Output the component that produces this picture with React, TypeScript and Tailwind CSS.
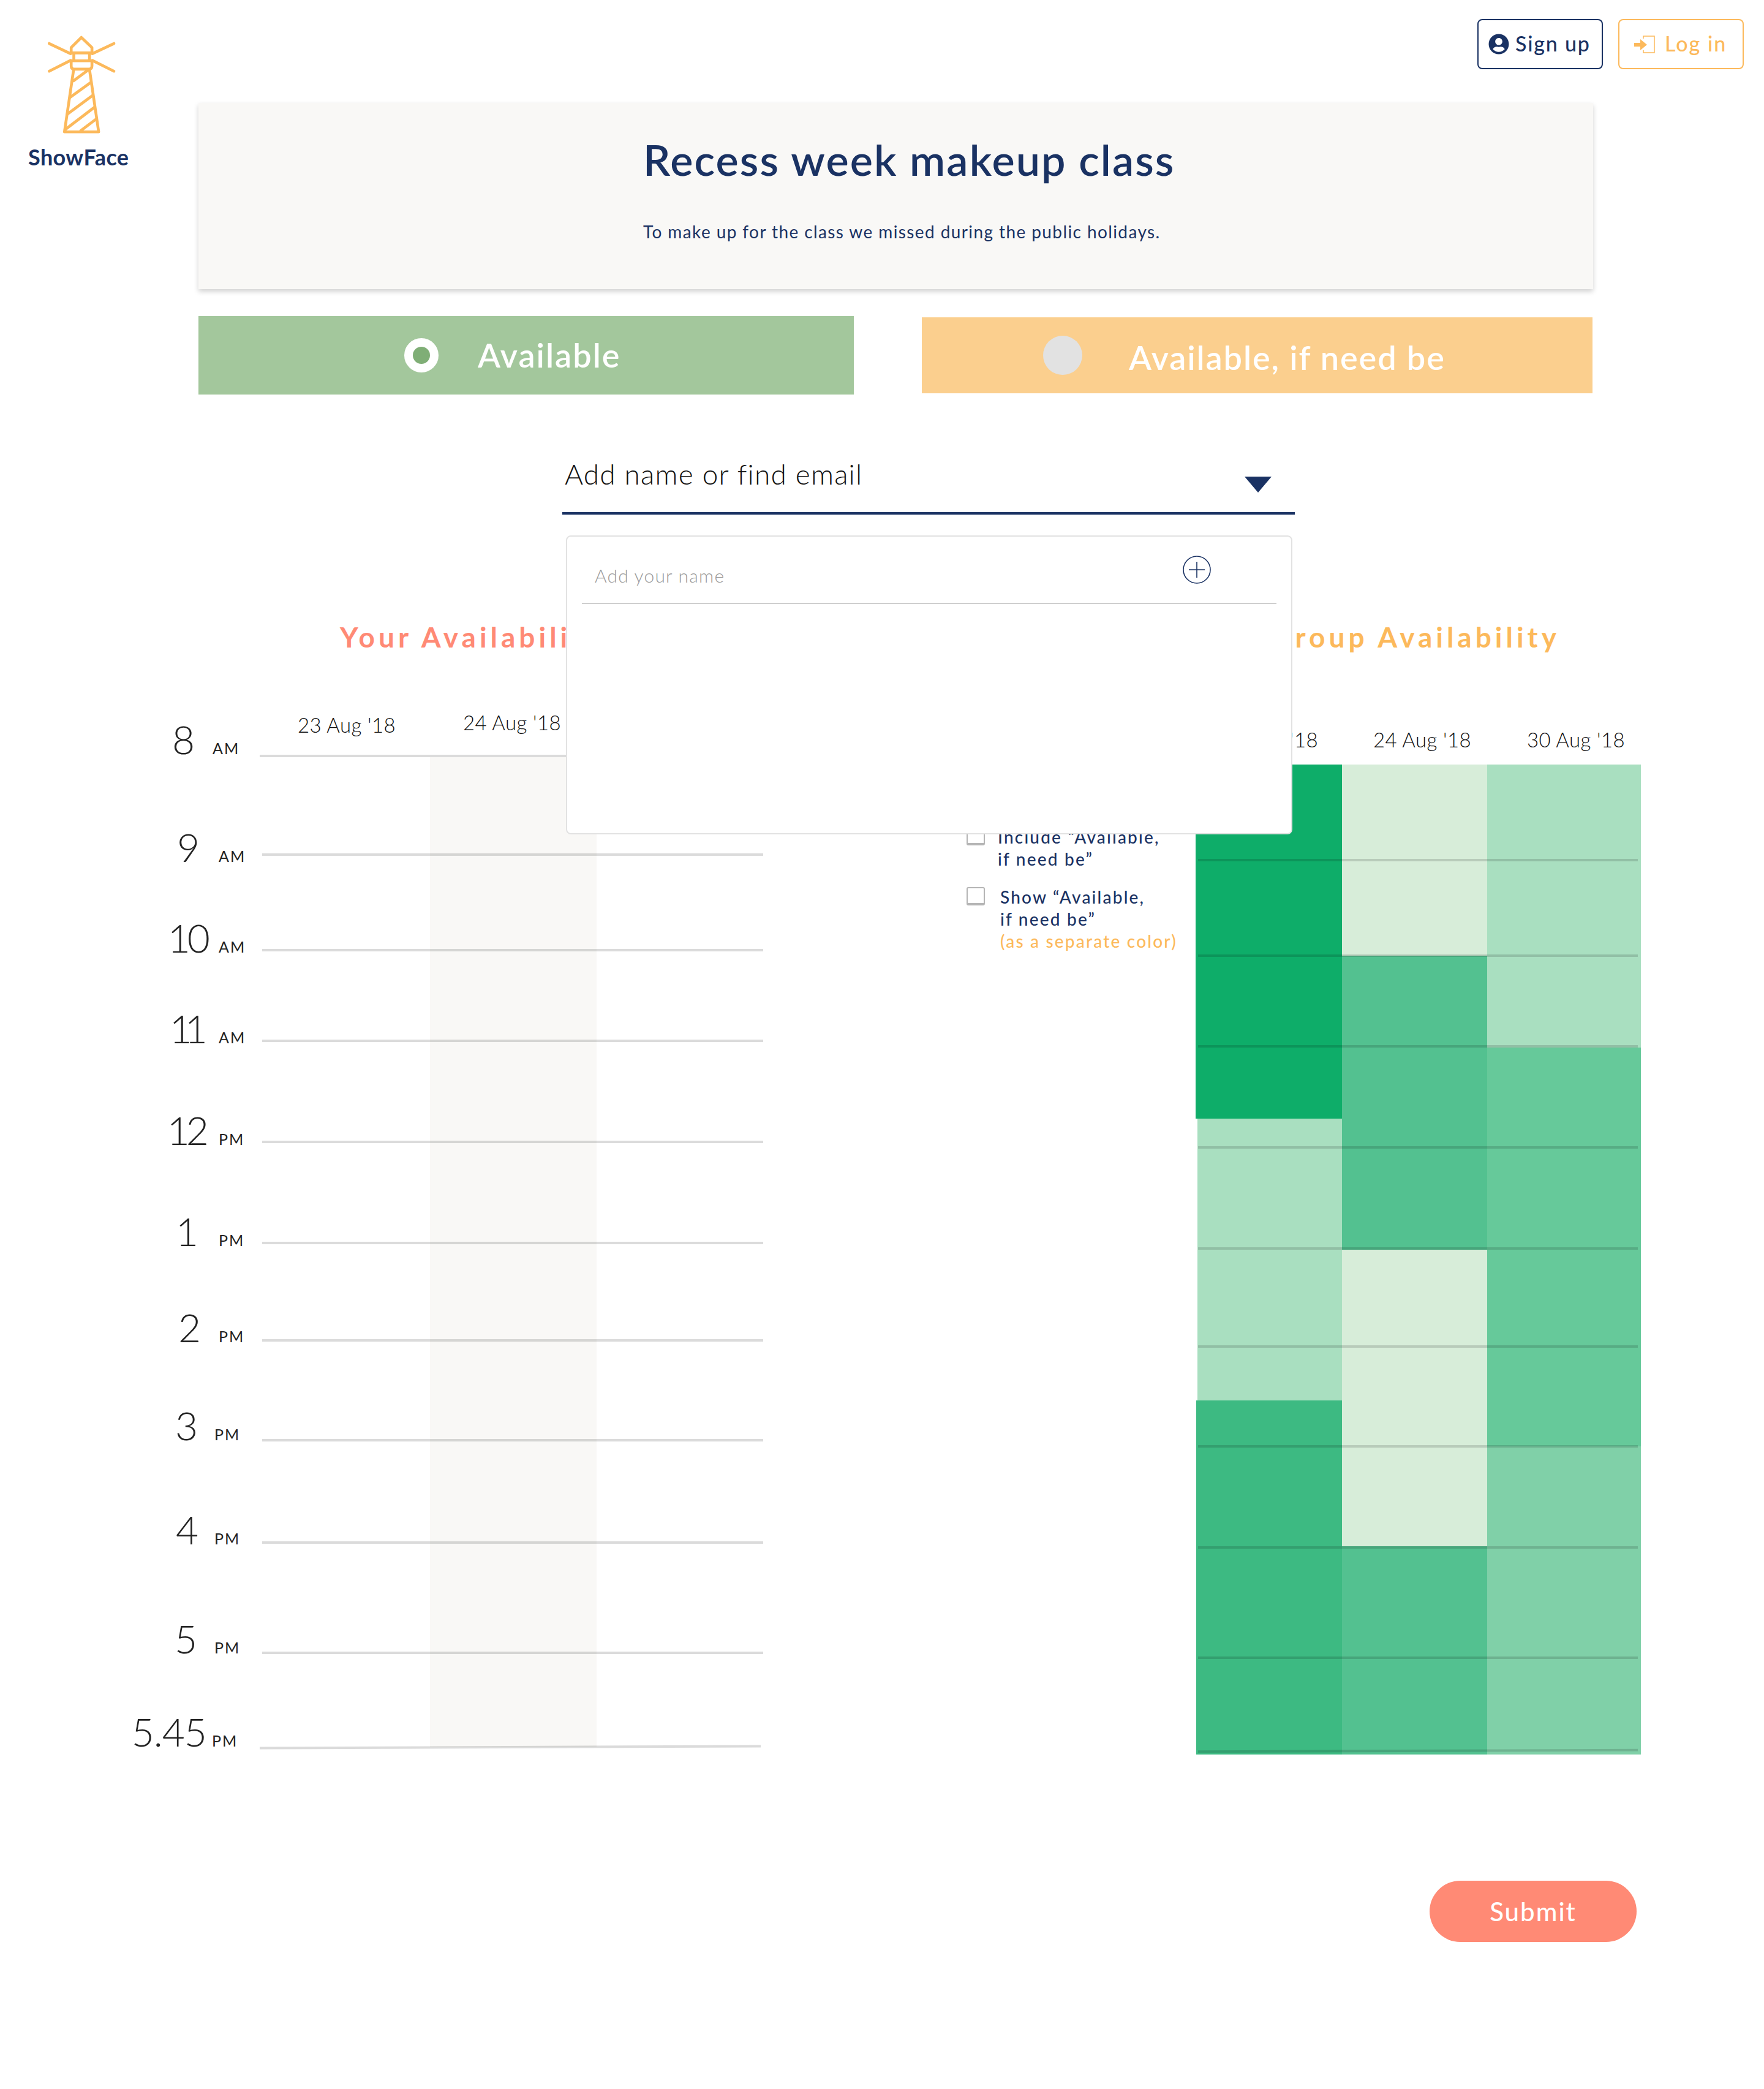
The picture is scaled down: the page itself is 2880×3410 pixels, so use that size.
import React from 'react';
import { FaUserCircle } from 'react-icons/fa';

const rows = [
  { n: '8', s: 'AM', row: 'h-[4px]', label: 'w-[424px] mb-[-3px]', num: 'w-[347px] pr-[29px]', line: 'w-[816px]' },
  { n: '9', s: 'AM', row: 'h-[161px]', label: 'w-[428px] mb-[-18px]', num: 'w-[357px] pr-[31px]', line: 'w-[818px]' },
  { n: '10', s: 'AM', row: 'h-[156px]', label: 'w-[428px] mb-[-10px]', num: 'w-[357px] pr-[19px] tracking-[-5px]', line: 'w-[818px]' },
  { n: '11', s: 'AM', row: 'h-[148px]', label: 'w-[428px] mb-[-10px]', num: 'w-[357px] pr-[30px] tracking-[-12px]', line: 'w-[818px]' },
  { n: '12', s: 'PM', row: 'h-[165px]', label: 'w-[428px] mb-[-11px]', num: 'w-[357px] pr-[22px] tracking-[-6px]', line: 'w-[818px]' },
  { n: '1', s: 'PM', row: 'h-[165px]', label: 'w-[428px] mb-[-11px]', num: 'w-[357px] pr-[33px]', line: 'w-[818px]' },
  { n: '2', s: 'PM', row: 'h-[159px]', label: 'w-[428px] mb-[-9px]', num: 'w-[357px] pr-[29px]', line: 'w-[818px]' },
  { n: '3', s: 'PM', row: 'h-[163px]', label: 'w-[428px] mb-[-6px]', num: 'w-[350px] pr-[27px]', line: 'w-[818px]' },
  { n: '4', s: 'PM', row: 'h-[167px]', label: 'w-[428px] mb-[-9px]', num: 'w-[350px] pr-[26px]', line: 'w-[818px]' },
  { n: '5', s: 'PM', row: 'h-[180px]', label: 'w-[428px] mb-[-7px]', num: 'w-[350px] pr-[28px]', line: 'w-[818px]' },
  { n: '5.45', s: 'PM', row: 'h-[154px]', label: 'w-[424px] mb-[-5px]', num: 'w-[346px] pr-[9px] tracking-[-1px]', line: 'w-[818px] -rotate-[0.2deg]' },
];

const groupCols = [
  {
    w: 'w-[239px]',
    cells: [
      'h-[578px] bg-[#0ead69]',
      'h-[460px] ml-[3px] bg-[#a9dfc0]',
      'h-[578px] ml-[1px] bg-[#3dba82]',
    ],
  },
  {
    w: 'w-[237px]',
    cells: [
      'h-[312px] bg-[#d7edd9]',
      'h-[480px] bg-[#53c190]',
      'h-[484px] bg-[#d7edd9]',
      'h-[340px] bg-[#53c190]',
    ],
  },
  {
    w: 'w-[251px]',
    cells: [
      'h-[462px] bg-[#a9dfc0]',
      'h-[651px] bg-[#66c99a]',
      'h-[503px] bg-[#80d0a8]',
    ],
  },
];

const groupLines = [
  'mt-[154px]', 'mt-[152px]', 'mt-[144px]', 'mt-[161px]', 'mt-[161px]',
  'mt-[156px]', 'mt-[159px]', 'mt-[161px]', 'mt-[176px]', 'mt-[148px] -rotate-[0.2deg]',
];

function Lighthouse() {
  return (
    <svg viewBox="170 80 340 490" className="w-[113px] h-[163px]" fill="none" stroke="#fcb95b" strokeWidth="14" strokeLinecap="round" strokeLinejoin="round">
      <path d="M288 165V142L338 92L390 142V165" />
      <path d="M288 168H392M288 207H392M301 170V205M378 170V205" />
      <path d="M288 207V232Q288 248 302 248H376Q390 248 390 232V207" />
      <path d="M300 250L255 556H423L378 250" />
      <path d="M180 122L285 172M498 122L392 172M180 258L285 205M498 258L392 205" />
      <path d="M300 305L372 252M285 385L382 315M268 470L392 378M258 545L402 435M335 550L412 492" />
    </svg>
  );
}

function LoginIcon() {
  return (
    <svg viewBox="0 0 34 29" className="w-[34px] h-[29px]" fill="#fcb95b">
      <path d="M0 12H10V6L21 15L10 24V18H0Z" />
      <path d="M15 5V1H33V28H15V24" fill="none" stroke="#fcb95b" strokeWidth="1.5" />
    </svg>
  );
}

function PlusIcon() {
  return (
    <svg viewBox="0 0 46 46" className="w-[46px] h-[46px]" fill="none" stroke="#1a3263" strokeWidth="1.6">
      <circle cx="23" cy="23" r="22" />
      <path d="M23 10V36M10 23H36" />
    </svg>
  );
}

function DayLabel({ children, className }: { children: React.ReactNode; className?: string }) {
  return <div className={`text-[33px] leading-none font-light tracking-[0.4px] text-[#111] whitespace-nowrap ${className || ''}`}>{children}</div>;
}

function Checkbox() {
  return <div className="w-[30px] h-[30px] shrink-0 rounded-[3px] border-2 border-b-4 border-[#b5b5b5] bg-white" />;
}

export default function App() {
  return (
    <div className="w-[2880px] h-[3410px] bg-white overflow-hidden font-[Lato,sans-serif] text-[#1a3263]">
      {/* top part */}
      <div className="flex h-[840px]">
        <div className="w-[324px] shrink-0 flex flex-col pt-[57px]">
          <div className="ml-[77px]"><Lighthouse /></div>
          <div className="ml-[46px] mt-[14px] text-[36px] leading-[44px] font-bold tracking-[0.4px]">ShowFace</div>
        </div>

        <div className="flex-1 flex flex-col">
          <div className="h-[168px] flex justify-end gap-[25px] pt-[31px] pr-[33px]">
            <div className="w-[205px] h-[82px] rounded-[8px] border-2 border-[#1a3263] flex items-center pl-[16px] gap-[10px] text-[34px] leading-[40px] font-medium tracking-[1.8px]">
              <FaUserCircle size={34} />
              <span className="mb-[2px]">Sign up</span>
            </div>
            <div className="w-[205px] h-[82px] rounded-[8px] border-2 border-[#fcb95b] flex items-center pl-[24px] gap-[16px] text-[34px] leading-[40px] font-medium tracking-[2px] text-[#fcb95b]">
              <LoginIcon />
              <span className="mb-[2px]">Log in</span>
            </div>
          </div>

          <div className="w-[2277px] h-[304px] bg-[#f9f8f6] shadow-[0_4px_8px_rgba(0,0,0,0.18)] flex flex-col pl-[726px]">
            <h1 className="mt-[47px] text-[70px] leading-[90px] font-semibold tracking-[2.1px] whitespace-nowrap">Recess week makeup class</h1>
            <p className="mt-[55px] text-[28px] leading-[36px] font-normal tracking-[1.4px] whitespace-nowrap">To make up for the class we missed during the public holidays.</p>
          </div>

          <div className="w-[2277px] mt-[44px] flex justify-between items-start">
            <div className="w-[1070px] h-[128px] bg-[#a3c79c] flex items-center pl-[336px] text-white text-[54px] font-semibold tracking-[2px]">
              <div className="w-[56px] h-[56px] rounded-full border-[14px] border-white bg-[#7fae76]" />
              <span className="ml-[64px] mb-[2px]">Available</span>
            </div>
            <div className="w-[1095px] h-[124px] mt-[2px] mr-[1px] bg-[#fbcf8e] flex items-center pl-[198px] text-white text-[54px] font-semibold tracking-[1.9px]">
              <div className="w-[64px] h-[64px] rounded-full bg-[#e2e2e2]" />
              <span className="ml-[76px] mt-[6px]">Available, if need be</span>
            </div>
          </div>

          <div className="relative ml-[594px] mt-[76px] w-[1196px] h-[120px] border-b-4 border-[#1a3263] flex items-start justify-between">
            <span className="ml-[4px] mt-[22px] text-[46px] leading-[64px] font-light tracking-[1.2px] text-[#111]">Add name or find email</span>
            <svg viewBox="0 0 44 26" className="w-[44px] h-[26px] mt-[58px] mr-[38px]" fill="#1a3263"><path d="M0 0H44L22 26Z" /></svg>
            <div className="absolute z-10 left-[6px] top-[154px] w-[1186px] h-[488px] bg-white border-2 border-[#e2e2e2] rounded-[8px]">
              <div className="mx-[24px] h-[110px] border-b-2 border-[#cfcfcf] flex items-center justify-between pl-[21px] pr-[107px]">
                <span className="mt-[18px] text-[30px] font-light tracking-[1.2px] text-[#9a9a9a]">Add your name</span>
                <PlusIcon />
              </div>
            </div>
          </div>
        </div>
      </div>

      {/* availability part */}
      <div className="flex mt-[170px]">
        <div className="w-[1578px] shrink-0">
          <h2 className="h-[60px] pl-[555px] text-[46px] leading-[60px] font-bold tracking-[6px] text-[#ff8a75] whitespace-nowrap">Your Availability</h2>
          <div className="h-[162px] flex items-end pb-[32px]">
            <DayLabel className="ml-[486px]">23 Aug '18</DayLabel>
            <DayLabel className="ml-[110px] mb-[4px]">24 Aug '18</DayLabel>
          </div>
          <div className="grid">
            <div className="col-start-1 row-start-1 ml-[702px] mt-[4px] w-[272px] mb-[2px] bg-[#f9f8f6]" />
            <div className="col-start-1 row-start-1 flex flex-col">
              {rows.map(r => (
                <div key={r.n} className={`flex items-end ${r.row}`}>
                  <div className={`shrink-0 flex items-baseline text-[#222] ${r.label}`}>
                    <span className={`shrink-0 text-right text-[64px] leading-none font-light ${r.num}`}>{r.n}</span>
                    <span className="text-[25px] leading-none tracking-[2px]">{r.s}</span>
                  </div>
                  <div className={`h-[4px] bg-black/[0.14] ${r.line}`} />
                </div>
              ))}
            </div>
          </div>
        </div>

        <div className="flex-1">
          <h2 className="h-[60px] pr-[333px] text-right text-[46px] leading-[60px] font-bold tracking-[6px] text-[#fcb95b] whitespace-nowrap">Group Availability</h2>
          <div className="h-[178px] flex items-end pb-[24px] pl-[414px]">
            <DayLabel className="w-[250px]">23 Aug '18</DayLabel>
            <DayLabel className="w-[251px]">24 Aug '18</DayLabel>
            <DayLabel>30 Aug '18</DayLabel>
          </div>
          <div className="flex">
            <div className="w-[374px] shrink-0 pt-[100px] flex flex-col gap-[26px] text-[28px] leading-[36px] font-medium tracking-[2.2px]">
              <div className="flex gap-[21px]">
                <div className="pt-[2px]"><Checkbox /></div>
                <span>Include “Available,<br />if need be”</span>
              </div>
              <div className="flex gap-[25px]">
                <div className="pt-[2px]"><Checkbox /></div>
                <span>Show “Available,<br />if need be”<br /><span className="text-[#fcb95b]">(as a separate color)</span></span>
              </div>
            </div>
            <div className="grid">
              <div className="col-start-1 row-start-1 flex">
                {groupCols.map((c, i) => (
                  <div key={i} className={`flex flex-col ${c.w}`}>
                    {c.cells.map((cell, j) => <div key={j} className={cell} />)}
                  </div>
                ))}
              </div>
              <div className="col-start-1 row-start-1 flex flex-col ml-[4px] w-[718px]">
                {groupLines.map((l, i) => <div key={i} className={`h-[4px] bg-black/[0.14] ${l}`} />)}
              </div>
            </div>
          </div>
        </div>
      </div>

      <div className="flex justify-end pr-[208px] mt-[206px]">
        <div className="w-[338px] h-[100px] rounded-full bg-[#ff8a75] flex items-center justify-center text-white text-[42px] font-medium tracking-[2px]">Submit</div>
      </div>
    </div>
  );
}
